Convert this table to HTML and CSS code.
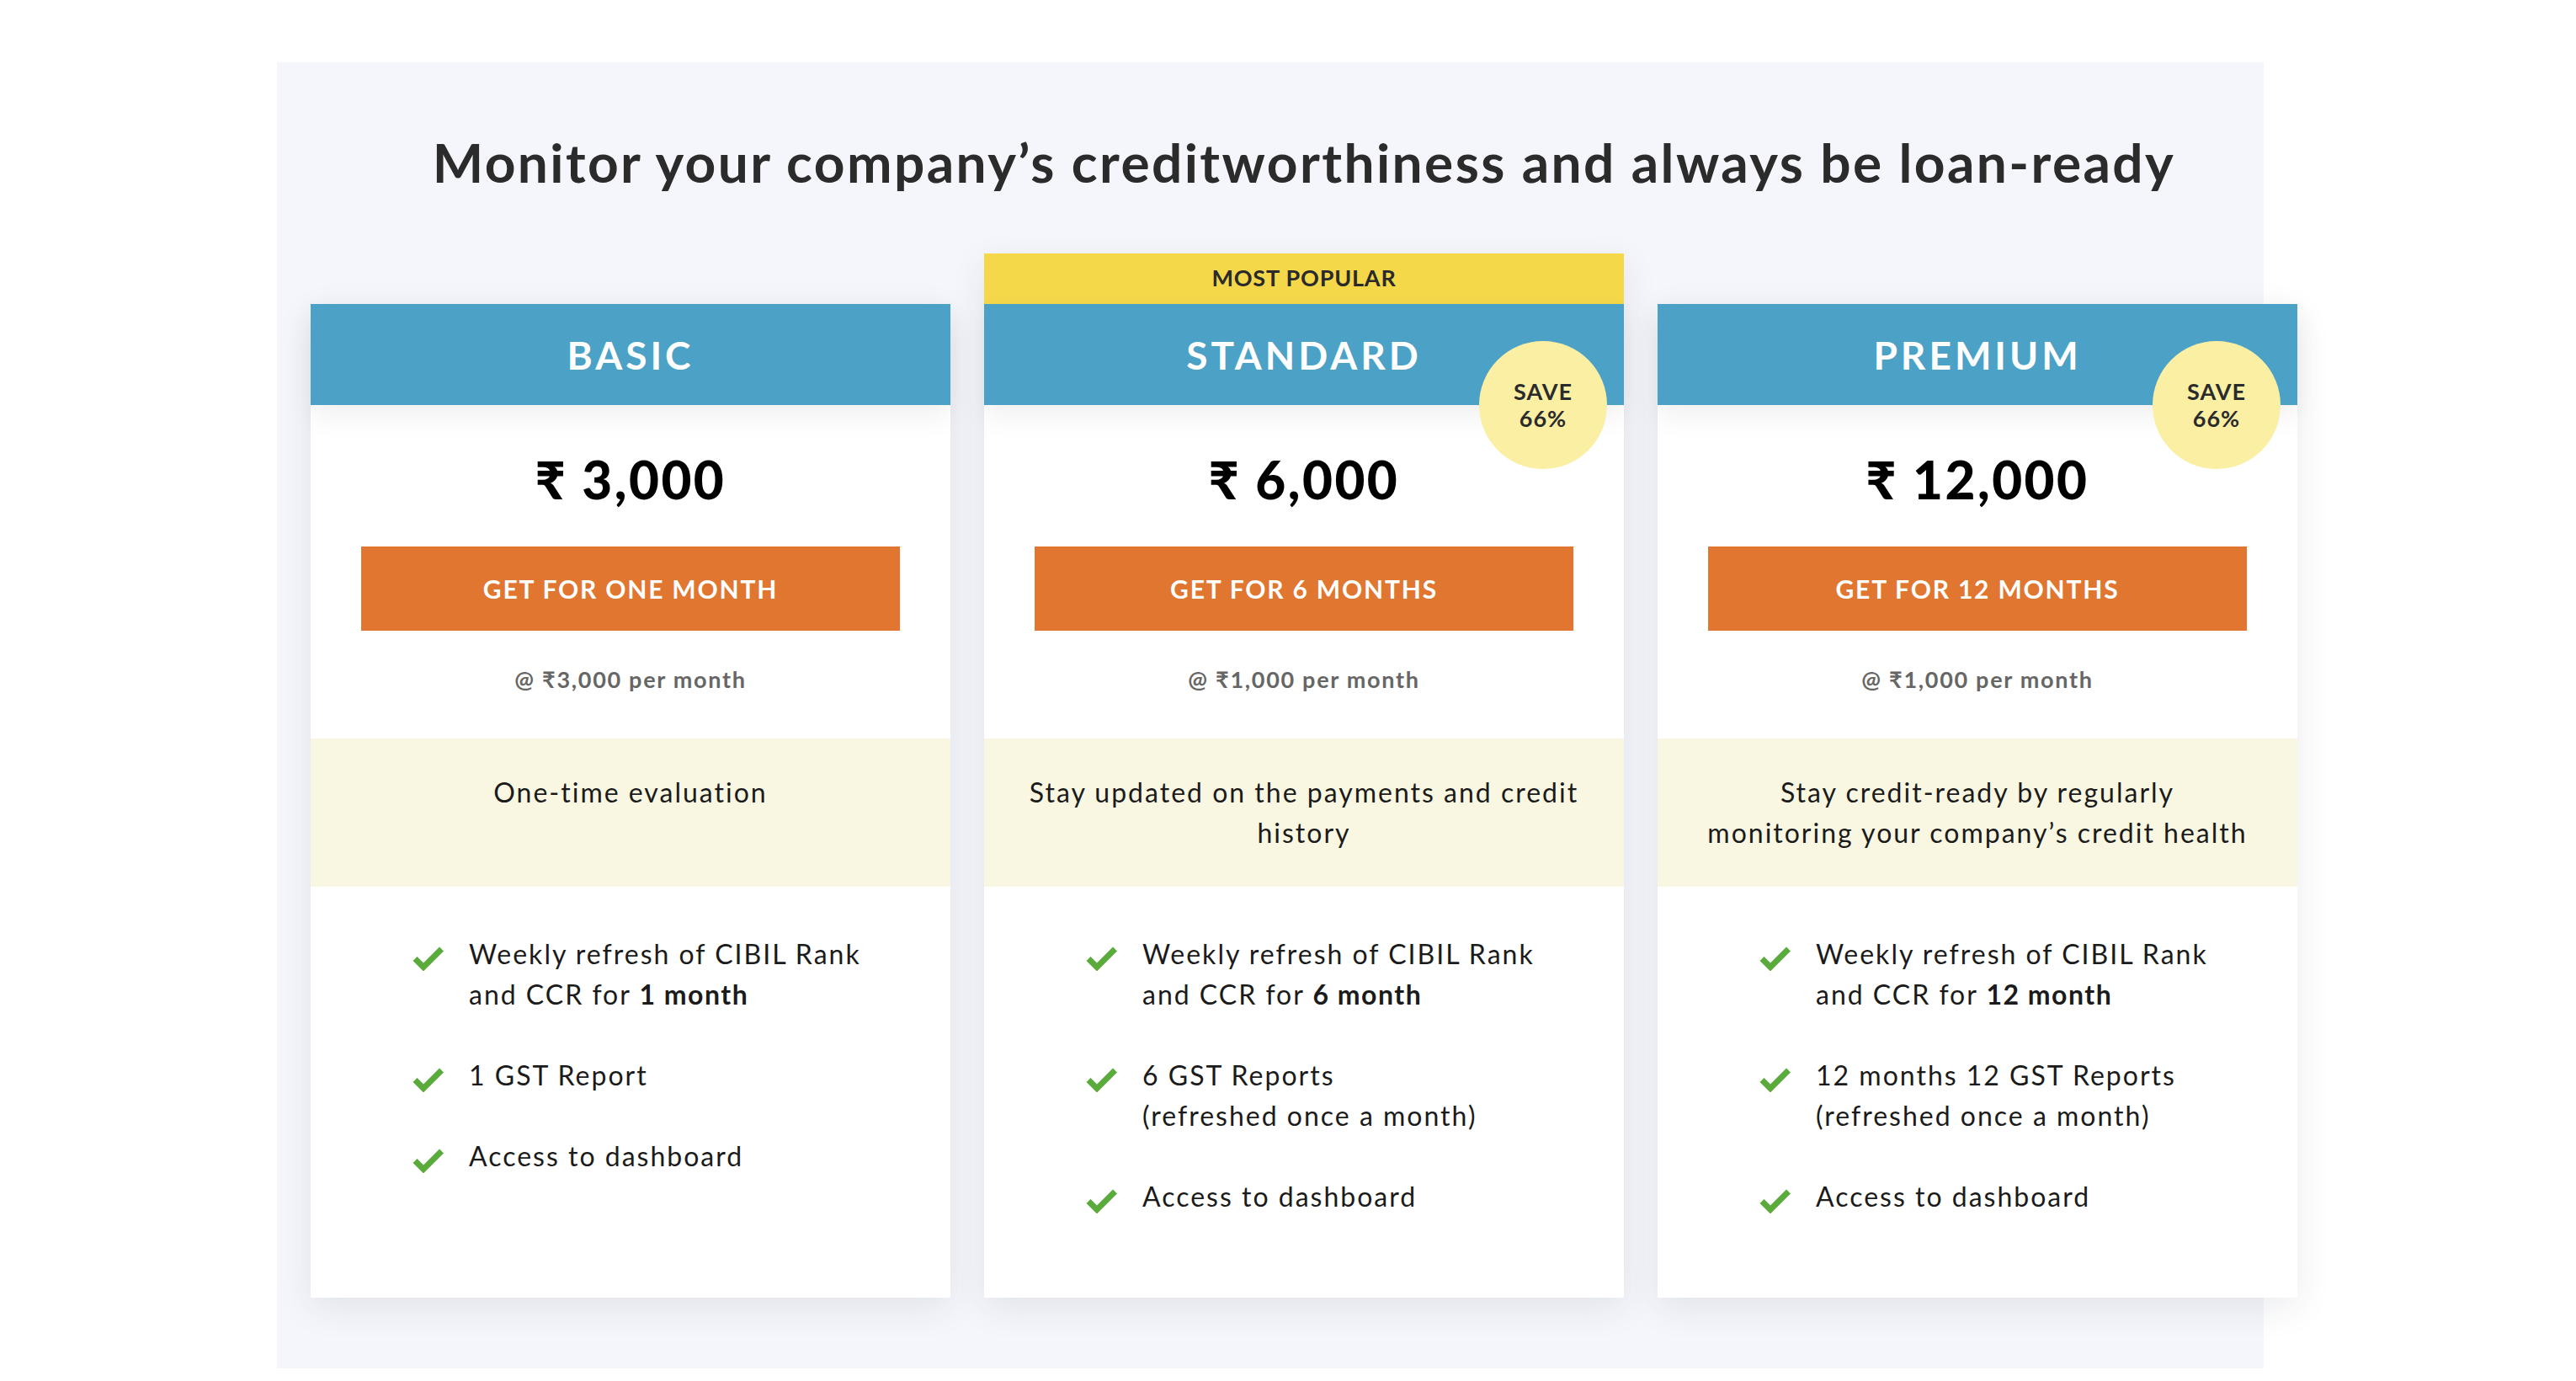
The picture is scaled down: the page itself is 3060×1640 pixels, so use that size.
FILE: index.html
```html
<!DOCTYPE html>
<html lang="en">
<head>
<meta charset="utf-8">
<title>Credit monitoring plans</title>
<link rel="stylesheet" href="styles.css">
</head>
<body>
<section class="plans">
  <div class="inner">
    <h1 class="title">Monitor your company’s creditworthiness and always be loan-ready</h1>
    <div class="cards">
      <article class="card card-offset">
        <header class="card-head">BASIC</header>
        <div class="price">₹ 3,000</div>
        <a class="buy">GET FOR ONE MONTH</a>
        <p class="per">@ ₹3,000 per month</p>
        <p class="desc">One-time evaluation</p>
        <ul class="features">
          <li><svg class="tick" viewBox="0 0 37 30"><polyline points="3,15.5 13,25.5 34.5,4"/></svg><span>Weekly refresh of CIBIL Rank<br>and CCR for <b>1 month</b></span></li>
          <li><svg class="tick" viewBox="0 0 37 30"><polyline points="3,15.5 13,25.5 34.5,4"/></svg><span>1 GST Report</span></li>
          <li><svg class="tick" viewBox="0 0 37 30"><polyline points="3,15.5 13,25.5 34.5,4"/></svg><span>Access to dashboard</span></li>
        </ul>
      </article>

      <article class="card">
        <div class="ribbon">MOST POPULAR</div>
        <header class="card-head">STANDARD<span class="save">SAVE<br>66%</span></header>
        <div class="price">₹ 6,000</div>
        <a class="buy">GET FOR 6 MONTHS</a>
        <p class="per">@ ₹1,000 per month</p>
        <p class="desc">Stay updated on the payments and credit<br>history</p>
        <ul class="features">
          <li><svg class="tick" viewBox="0 0 37 30"><polyline points="3,15.5 13,25.5 34.5,4"/></svg><span>Weekly refresh of CIBIL Rank<br>and CCR for <b>6 month</b></span></li>
          <li><svg class="tick" viewBox="0 0 37 30"><polyline points="3,15.5 13,25.5 34.5,4"/></svg><span>6 GST Reports<br>(refreshed once a month)</span></li>
          <li><svg class="tick" viewBox="0 0 37 30"><polyline points="3,15.5 13,25.5 34.5,4"/></svg><span>Access to dashboard</span></li>
        </ul>
      </article>

      <article class="card card-offset">
        <header class="card-head">PREMIUM<span class="save">SAVE<br>66%</span></header>
        <div class="price">₹ 12,000</div>
        <a class="buy">GET FOR 12 MONTHS</a>
        <p class="per">@ ₹1,000 per month</p>
        <p class="desc">Stay credit-ready by regularly<br>monitoring your company’s credit health</p>
        <ul class="features">
          <li><svg class="tick" viewBox="0 0 37 30"><polyline points="3,15.5 13,25.5 34.5,4"/></svg><span>Weekly refresh of CIBIL Rank<br>and CCR for <b>12 month</b></span></li>
          <li><svg class="tick" viewBox="0 0 37 30"><polyline points="3,15.5 13,25.5 34.5,4"/></svg><span>12 months 12 GST Reports<br>(refreshed once a month)</span></li>
          <li><svg class="tick" viewBox="0 0 37 30"><polyline points="3,15.5 13,25.5 34.5,4"/></svg><span>Access to dashboard</span></li>
        </ul>
      </article>
    </div>
  </div>
</section>
</body>
</html>
```
FILE: styles.css
```css
* { box-sizing: border-box; }

body {
  margin: 0;
  background: #ffffff;
  font-family: "Lato", "Noto Sans", "DejaVu Sans", sans-serif;
  color: #1b1b1b;
}

.plans {
  width: 2360px;
  margin: 74px 0 0 329px;
  padding: 80px 0 84px 40px;
  background: #f5f6fb;
}

.inner {
  width: 2360px;
}

.title {
  margin: 0;
  text-align: center;
  font-size: 64px;
  line-height: 77px;
  font-weight: 700;
  color: #2b2b2b;
  letter-spacing: 2.4px;
}

.cards {
  display: grid;
  grid-template-columns: repeat(3, 760px);
  column-gap: 40px;
  margin-top: 70px;
}

.card {
  background: #ffffff;
  box-shadow: 0 12px 40px rgba(30, 40, 80, 0.09);
  display: flex;
  flex-direction: column;
}

.card-offset {
  margin-top: 60px;
}

.ribbon {
  height: 60px;
  padding-bottom: 4px;
  background: #f5d84a;
  color: #2a2a2a;
  font-size: 27px;
  font-weight: 700;
  letter-spacing: 0.8px;
  display: flex;
  align-items: center;
  justify-content: center;
}

.card-head {
  position: relative;
  z-index: 1;
  height: 120px;
  background: #4ba2c6;
  color: #ffffff;
  font-size: 46px;
  font-weight: 700;
  letter-spacing: 4px;
  display: flex;
  align-items: center;
  justify-content: center;
  box-shadow: 0 14px 30px rgba(0, 0, 0, 0.06);
}

.save {
  position: absolute;
  right: 20px;
  top: 44px;
  width: 152px;
  height: 152px;
  border-radius: 50%;
  background: #fbefa4;
  color: #2b2b2b;
  font-size: 27px;
  line-height: 32px;
  letter-spacing: 1px;
  font-weight: 700;
  display: flex;
  align-items: center;
  justify-content: center;
  text-align: center;
}

.price {
  margin-top: 57px;
  height: 62px;
  line-height: 62px;
  text-align: center;
  font-size: 62px;
  font-weight: 900;
  color: #000000;
  letter-spacing: 2.5px;
}

.buy {
  display: flex;
  align-items: center;
  justify-content: center;
  height: 100px;
  margin: 49px 60px 0;
  background: #e0762f;
  color: #ffffff;
  font-size: 30px;
  font-weight: 700;
  letter-spacing: 1.8px;
}

.per {
  margin: 44px 0 0;
  height: 28px;
  line-height: 28px;
  text-align: center;
  font-size: 27px;
  font-weight: 700;
  letter-spacing: 1.7px;
  color: #666666;
}

.desc {
  margin: 56px 0 0;
  height: 176px;
  padding: 40px 30px 0;
  background: #f9f7e1;
  text-align: center;
  font-size: 32px;
  line-height: 48px;
  letter-spacing: 2px;
  color: #1b1b1b;
}

.features {
  list-style: none;
  margin: 0;
  padding: 56px 20px 48px 121px;
}

.features li {
  display: flex;
  align-items: flex-start;
  gap: 30px;
  margin-bottom: 48px;
  font-size: 32px;
  line-height: 48px;
  letter-spacing: 2px;
}

.features b {
  font-weight: 700;
  letter-spacing: 1.5px;
}

.tick {
  flex: none;
  width: 37px;
  height: 30px;
  margin-top: 14px;
  fill: none;
  stroke: #5aab3c;
  stroke-width: 7;
  stroke-linejoin: miter;
  stroke-linecap: butt;
}
```
